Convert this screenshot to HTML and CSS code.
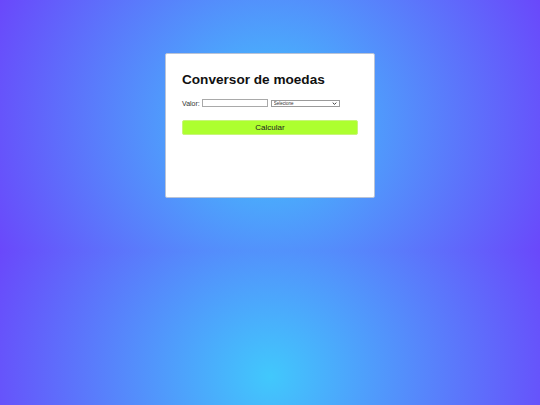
FILE: index.html
```html
<!DOCTYPE html>
<html lang="pt-BR">
<head>
    <meta charset="UTF-8">
    <meta name="viewport" content="width=device-width, initial-scale=1.0">
    <title>Conversor de moedas</title>
    <link rel="stylesheet" href="styles.css">
</head>
<body>
    <div class="container">
        <h1>Conversor de moedas</h1>
        <div class="linha">
            <label for="valor">Valor:</label>
            <input type="text" id="valor" class="campo">
            <div class="select-wrap">
                <select id="moeda" class="moeda">
                    <option>Selecione</option>
                    <option>Dólar</option>
                    <option>Euro</option>
                </select>
                <svg class="seta" viewBox="0 0 8 5" width="5" height="3">
                    <path d="M1 1 L4 4 L7 1" fill="none" stroke="#333" stroke-width="1.6"/>
                </svg>
            </div>
        </div>
        <button class="btn">Calcular</button>
        <div class="resultado" id="resultado"></div>
    </div>
</body>
</html>
```

FILE: styles.css
```css
html {
    background: radial-gradient(circle, #41c8fc, #6a48fb);
    background-size: 100% 251px;
}
body {
    font-family: "Liberation Sans", Arial, sans-serif;
    margin: 0;
}
.container {
    width: 176px;
    margin: 53px auto 0;
    padding: 16px;
    background-color: white;
    border: 1px solid #b9c3d6;
    border-radius: 2px;
}
h1 {
    font-size: 13.6px;
    line-height: 19px;
    margin: 0 0 10px;
    color: #111;
}
.linha {
    display: flex;
    align-items: center;
    font-size: 7px;
    color: #333;
}
.linha label {
    margin-right: 2px;
}
.campo {
    width: 66px;
    height: 8px;
    box-sizing: border-box;
    border: 1px solid #a9a9a9;
    padding: 0;
    margin-right: 3px;
}
.select-wrap {
    position: relative;
}
.moeda {
    appearance: none;
    display: block;
    width: 69px;
    height: 7px;
    box-sizing: border-box;
    border: 1px solid #9a9a9a;
    border-radius: 0;
    background: white;
    padding: 0 0 0 2px;
    font-family: inherit;
    font-size: 4.5px;
    line-height: 5px;
    color: #333;
}
.seta {
    position: absolute;
    right: 3px;
    top: 2px;
}
.btn {
    display: block;
    width: 100%;
    height: 15px;
    margin-top: 13px;
    background-color: #adff2f;
    border: 1px solid #c8f57a;
    border-radius: 2px;
    font-family: inherit;
    font-size: 8px;
    color: #222;
    padding: 0;
}
.resultado {
    min-height: 46px;
}
```
